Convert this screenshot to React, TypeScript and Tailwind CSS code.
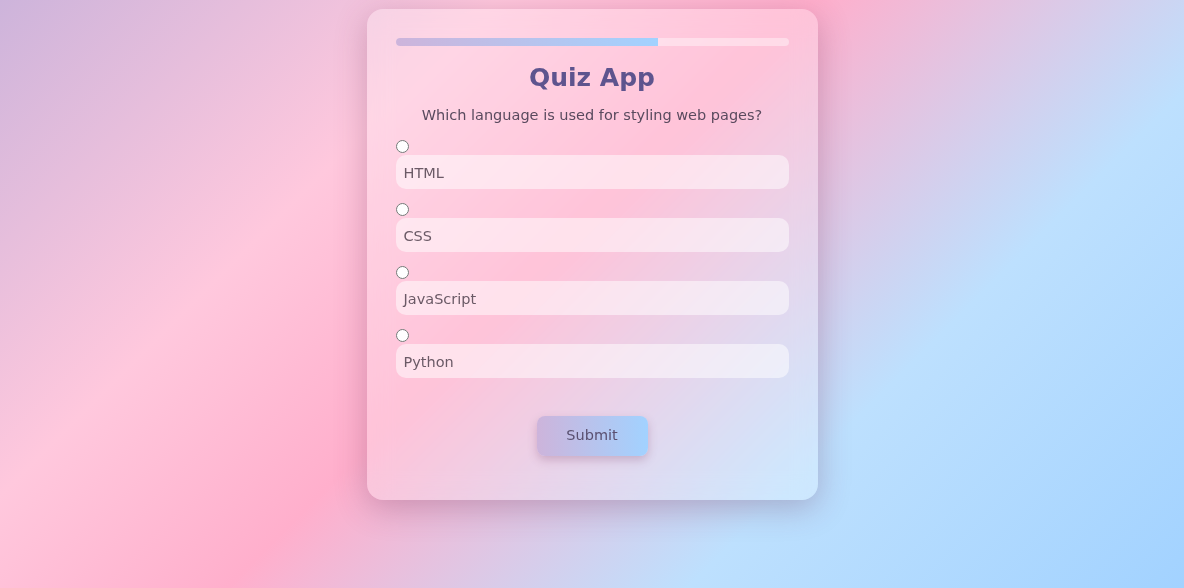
import { useState } from 'react'

const options = ['HTML', 'CSS', 'JavaScript', 'Python']

export default function App() {
  const [selected, setSelected] = useState<string | null>(null)

  return (
    <div
      className="min-h-[588px] w-full flex justify-center items-start pt-[9px] bg-[linear-gradient(135deg,#cdb4db_0%,#ffc8dd_28%,#ffafcc_46%,#bde0fe_72%,#a2d2ff_100%)]"
      style={{ fontFamily: '"DejaVu Sans", "Open Sans", sans-serif' }}
    >
      <div className="w-[451px] rounded-[16px] bg-white/25 backdrop-blur-md shadow-[0_8px_32px_rgba(110,50,90,0.3)] px-[29px] pt-[29px] pb-[44px]">
        {/* progress */}
        <div className="h-[8px] w-full rounded-full bg-white/40 overflow-hidden">
          <div className="h-full w-[66.7%] bg-[linear-gradient(90deg,#cdb4db,#a2d2ff)]" />
        </div>

        <h1 className="mt-[14px] text-center text-[25px] leading-[36px] font-semibold text-[#5e548e]">
          Quiz App
        </h1>

        <p className="mt-[10px] text-center text-[14.5px] leading-[18px] text-[#5a4a5e]">
          Which language is used for styling web pages?
        </p>

        <div className="mt-[16px] flex flex-col gap-[14px]">
          {options.map((opt) => (
            <div key={opt} className="flex flex-col">
              <input
                type="radio"
                name="answer"
                id={opt}
                checked={selected === opt}
                onChange={() => setSelected(opt)}
                className="block w-[13px] h-[13px]"
              />
              <label
                htmlFor={opt}
                className="mt-[2px] block h-[34px] leading-[36px] rounded-[10px] bg-white/50 px-[8px] text-[14.5px] text-[#6b5a66] cursor-pointer"
              >
                {opt}
              </label>
            </div>
          ))}
        </div>

        <div className="mt-[38px] flex justify-center">
          <button className="w-[111px] h-[40px] rounded-[8px] bg-[linear-gradient(90deg,#cdb4db,#a2d2ff)] text-[14.5px] text-[#5a5070] shadow-[0_4px_10px_rgba(110,50,90,0.25)]">
            Submit
          </button>
        </div>
      </div>
    </div>
  )
}
